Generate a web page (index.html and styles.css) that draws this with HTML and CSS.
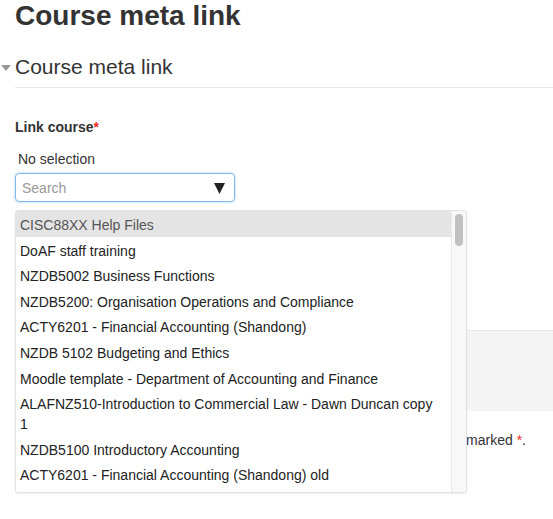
FILE: index.html
```html
<!DOCTYPE html>
<html lang="en">
<head>
<meta charset="utf-8">
<title>Course meta link</title>
<link rel="stylesheet" href="styles.css">
</head>
<body>
<div class="page">
  <h1 class="title">Course meta link</h1>

  <div class="legend">
    <span class="caret"><svg width="10" height="6" viewBox="0 0 10 6"><polygon points="0,0 10,0 5,6" fill="#999"/></svg></span>
    <h2 class="legend-title">Course meta link</h2>
  </div>

  <div class="field-label">Link course<span class="req">*</span></div>
  <div class="selection">No selection</div>

  <div class="search-wrap">
    <div class="search-box">
      <span class="placeholder">Search</span>
      <svg class="down" width="11" height="11" viewBox="0 0 11 11"><polygon points="0,0 11,0 5.5,11" fill="#222"/></svg>
    </div>

    <div class="suggestions">
      <ul class="options">
        <li class="option active">CISC88XX Help Files</li>
        <li class="option">DoAF staff training</li>
        <li class="option">NZDB5002 Business Functions</li>
        <li class="option">NZDB5200: Organisation Operations and Compliance</li>
        <li class="option">ACTY6201 - Financial Accounting (Shandong)</li>
        <li class="option">NZDB 5102 Budgeting and Ethics</li>
        <li class="option">Moodle template - Department of Accounting and Finance</li>
        <li class="option">ALAFNZ510-Introduction to Commercial Law - Dawn Duncan copy 1</li>
        <li class="option">NZDB5100 Introductory Accounting</li>
        <li class="option">ACTY6201 - Financial Accounting (Shandong) old</li>
      </ul>
      <div class="scroll-track"><div class="scroll-thumb"></div></div>
    </div>
  </div>

  <div class="form-actions"></div>
  <div class="required-note">There are required fields in this form marked <span class="req">*</span>.</div>
</div>
</body>
</html>
```

FILE: styles.css
```css
html, body {
  margin: 0;
  padding: 0;
  background: #fff;
}

body {
  font-family: "Liberation Sans", Arial, Helvetica, sans-serif;
  color: #333;
  font-size: 14px;
  line-height: 20px;
}

.page {
  padding-left: 15px;
  padding-bottom: 70px;
}

.title {
  margin: 0;
  padding-top: 1px;
  font-size: 28px;
  line-height: 30px;
  font-weight: bold;
  color: #333;
}

.legend {
  display: flex;
  align-items: center;
  margin-top: 24px;
  padding-bottom: 8px;
  border-bottom: 1px solid #e5e5e5;
}

.caret {
  display: flex;
  align-items: center;
  width: 15px;
  margin-left: -14px;
  margin-right: -1px;
  padding-top: 2px;
}

.legend-title {
  margin: 0;
  font-size: 21px;
  line-height: 24px;
  font-weight: normal;
  color: #333;
}

.field-label {
  margin-top: 29px;
  font-weight: bold;
  color: #333;
}

.req {
  color: #ee2a2a;
  font-weight: normal;
}

.field-label .req {
  font-weight: bold;
}

.selection {
  margin-top: 12px;
  padding-left: 3px;
  color: #333;
}

.search-wrap {
  position: relative;
  margin-top: 4px;
  width: 220px;
}

.search-box {
  box-sizing: border-box;
  height: 29px;
  width: 220px;
  border: 1px solid #7fb7ee;
  border-radius: 4px;
  box-shadow: 0 0 3px rgba(102, 175, 233, 0.55);
  display: flex;
  align-items: center;
  justify-content: space-between;
  padding: 0 9px 0 6px;
}

.placeholder {
  color: #999;
}

.down {
  display: block;
  margin-top: 2px;
}

.suggestions {
  position: absolute;
  top: 37px;
  left: 0;
  width: 452px;
  height: 283px;
  box-sizing: border-box;
  border: 1px solid #e2e2e2;
  border-radius: 3px;
  background: #fff;
  box-shadow: 0 1px 2px rgba(0, 0, 0, 0.08);
  display: flex;
  overflow: hidden;
  z-index: 5;
}

.options {
  list-style: none;
  margin: 0;
  padding: 0;
  flex: 1;
  overflow: hidden;
}

.option {
  padding: 4px 12px 1.6px 4px;
  color: #222;
}

.option.active {
  background: #e4e4e4;
  color: #555;
}

.scroll-track {
  width: 15px;
  flex: none;
  box-sizing: border-box;
  border-left: 1px solid #e9e9e9;
  background: #f8f8f8;
  padding: 3px 0 0 3px;
}

.scroll-thumb {
  width: 8px;
  height: 32px;
  border-radius: 4px;
  background: #c1c1c1;
}

.form-actions {
  margin-top: 128px;
  height: 80px;
  border-top: 1px solid #e6e6e6;
  background: #f4f4f4;
}

.required-note {
  margin-top: 19px;
  text-align: right;
  padding-right: 27px;
  color: #333;
}
```
